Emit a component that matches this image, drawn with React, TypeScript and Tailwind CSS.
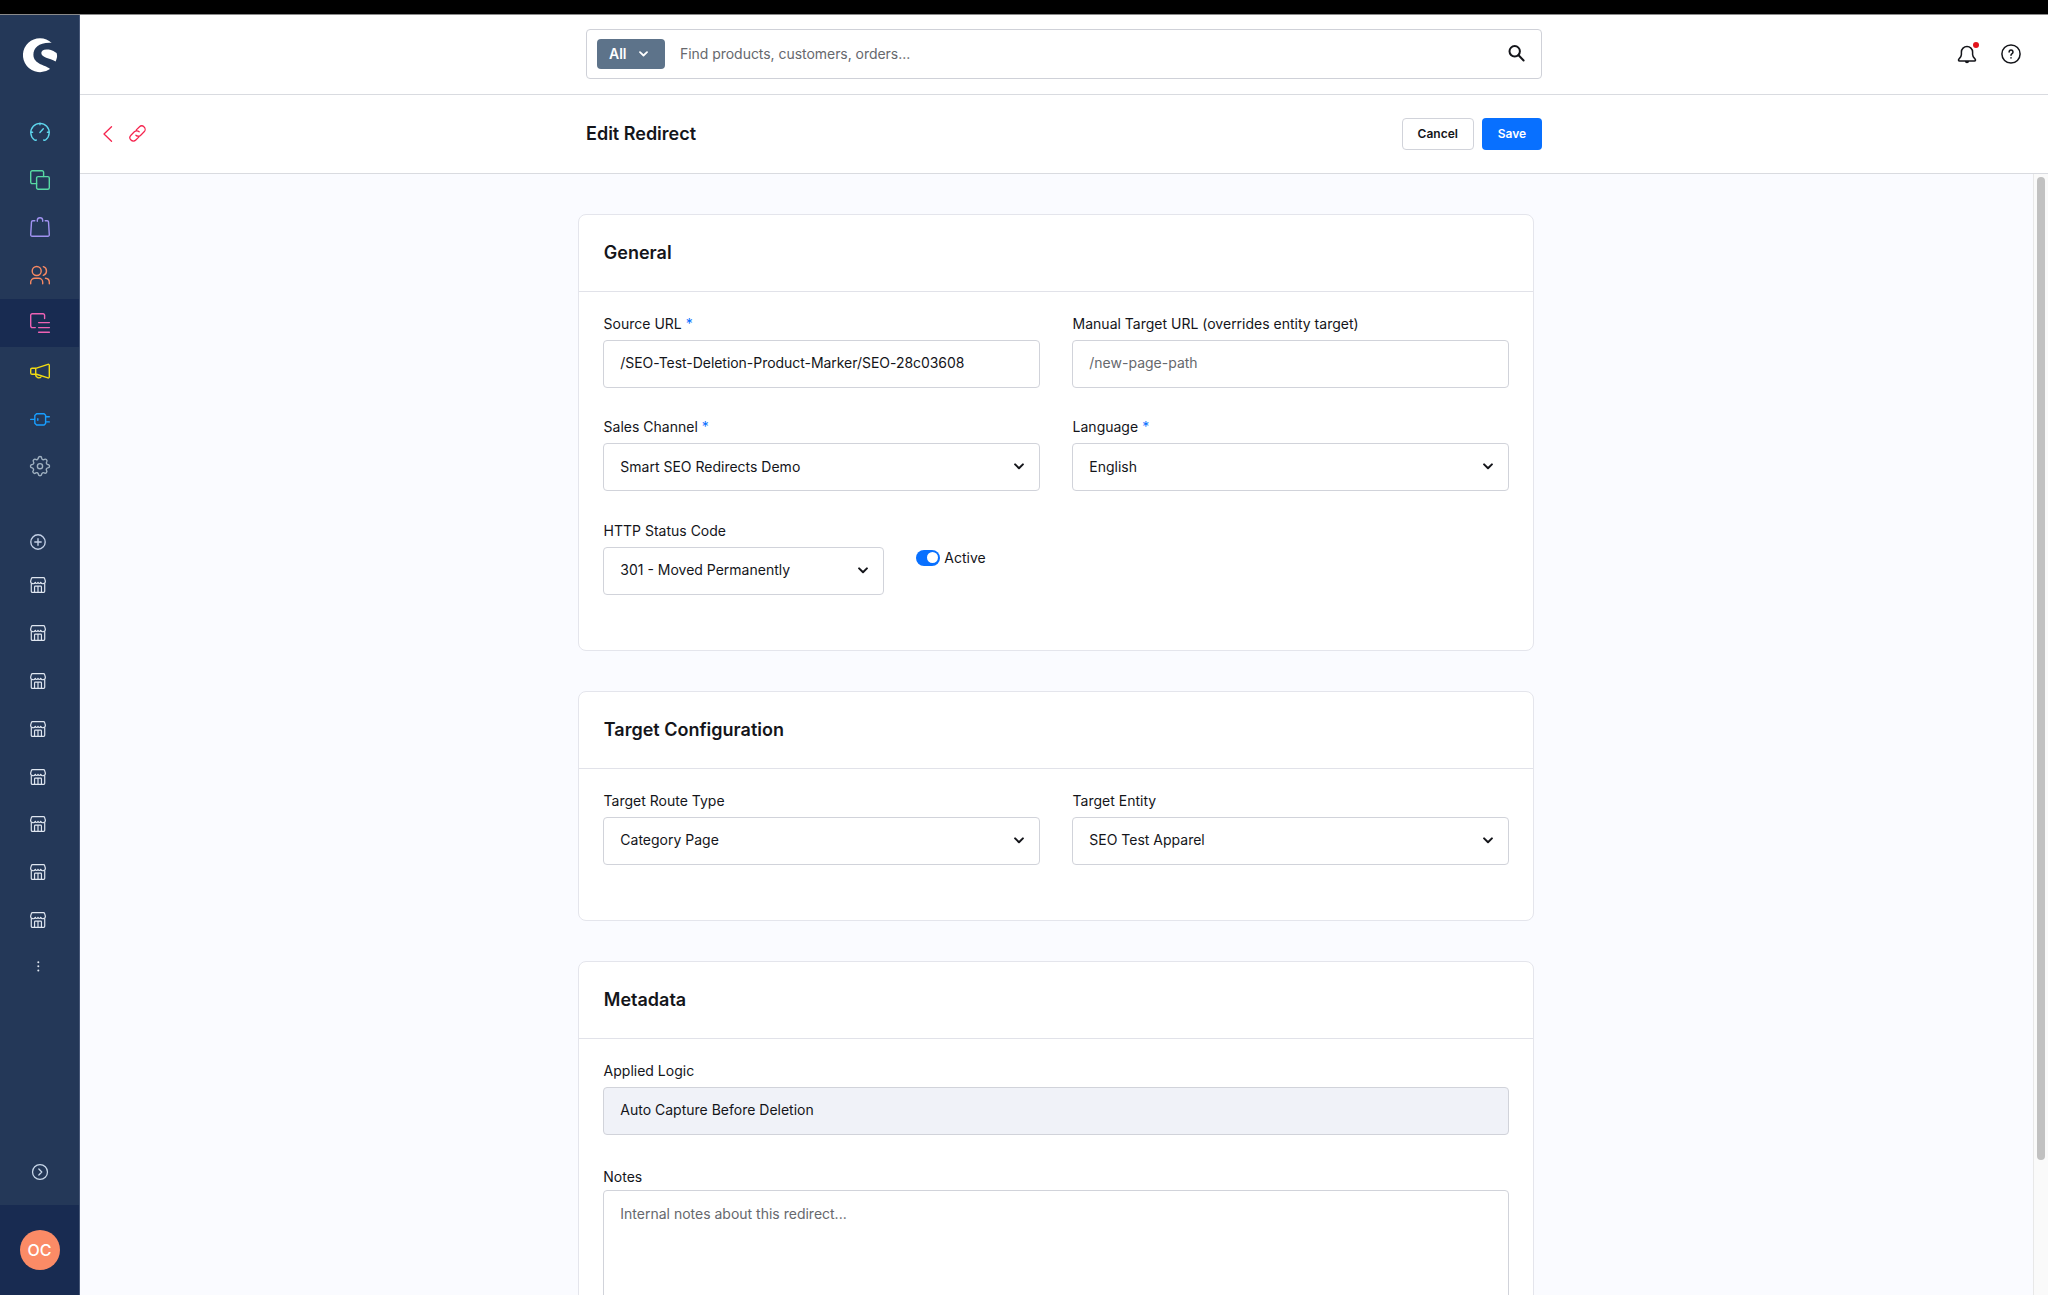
import React from "react";

type P = { children: React.ReactNode; size?: number; className?: string; w?: number };

/* Outline icon on a 20x20 grid */
function Ico({ children, size = 20, className = "", w = 1.4 }: P) {
  return (
    <svg width={size} height={size} viewBox="0 0 20 20" fill="none" stroke="currentColor" strokeWidth={w} strokeLinecap="round" strokeLinejoin="round" className={`shrink-0 overflow-visible ${className}`}>
      {children}
    </svg>
  );
}

const nav = [
  { color: "text-[#5fd7ee]", body: <><path d="M6.300 18a2 2 0 0 1-2.100-.300 9.200 9.200 0 1 1 11.600 0 2 2 0 0 1-2.100.300" /><path d="M10 1.200v1.500M1 10.200h1.600M17.400 10.200H19M9.900 10.400 13.300 6.800" /></> },
  { color: "text-[#57d9a3]", body: <><path d="M6.600 13.600H2.200A1.500 1.500 0 0 1 .7 12.100V2.200A1.500 1.500 0 0 1 2.200.700h9.900a1.500 1.500 0 0 1 1.500 1.500v4.400" /><rect x="6.600" y="6.600" width="12.700" height="12.700" rx="1.500" /></> },
  { color: "text-[#a092f0]", body: <><path d="M4.800 3.700H2.800a1.300 1.300 0 0 0-1.300 1.200L.7 17.800a1.400 1.400 0 0 0 1.400 1.500h15.800a1.400 1.400 0 0 0 1.400-1.500L18.500 4.900a1.300 1.300 0 0 0-1.300-1.200h-2" /><path d="M7.300 4.300V3.200A2.600 2.600 0 0 1 10 .8a2.600 2.600 0 0 1 2.700 2.400v1.100" /></> },
  { color: "text-[#f88962]", body: <><circle cx="6.700" cy="6" r="4.500" /><path d="M.7 18.700v-1.500a4 4 0 0 1 4-4h4a4 4 0 0 1 4 4v1.500M13.300 1.700a4.500 4.500 0 0 1 0 8.600M15.500 13.200a4 4 0 0 1 3.800 4v1.500" /></> },
  { color: "text-[#ee62b4]", active: true, body: <><path d="M5.300 14.600H2.200a1.500 1.500 0 0 1-1.500-1.500V2.300A1.500 1.500 0 0 1 2.200.8h10.900a1.500 1.500 0 0 1 1.500 1.500v3.300M8.600 9.600h10.800M8.600 14.600h10.800M8.600 19.300h10.800" /></> },
  { color: "text-[#f2dc12]", body: <><path d="M5.700 7.300 18 3.300a1 1 0 0 1 1.300 1V16a1 1 0 0 1-1.300.9L5.700 13ZM2 7.200h3.700v6H2A1.300 1.300 0 0 1 .7 12V8.500A1.300 1.300 0 0 1 2 7.200ZM5.700 13.300v.8a3 3 0 0 0 5.600 1.200" /></> },
  { color: "text-[#189eff]", body: <><path d="M.7 10.400h3.600M4.800 6.600 6.600 4.700h7.500l1.500 1.500v8.300l-1.500 1.500H6.600l-1.800-1.800ZM7.800 9.800v1.500M15.800 7.800h3.500M15.800 12.900h3.500" /></> },
  { color: "text-[#9fb0c0]", body: <><circle cx="10" cy="10.200" r="2.600" /><path d="M8.300 2.200a1.700 1.700 0 0 1 3.400 0 1.700 1.700 0 0 0 2.700 1.200 1.700 1.700 0 0 1 2.300 2.400A1.700 1.700 0 0 0 17.800 8.500a1.700 1.700 0 0 1 0 3.400 1.700 1.700 0 0 0-1.200 2.700 1.700 1.700 0 0 1-2.400 2.300A1.700 1.700 0 0 0 11.700 18a1.700 1.700 0 0 1-3.400 0 1.700 1.700 0 0 0-2.600-1.100 1.700 1.700 0 0 1-2.400-2.400A1.700 1.700 0 0 0 2.200 11.900a1.700 1.700 0 0 1 0-3.400 1.700 1.700 0 0 0 1.200-2.800 1.700 1.700 0 0 1 2.300-2.300 1.700 1.700 0 0 0 2.600-1.200Z" /></> },
];

function Shop() {
  return (
    <Ico size={16} w={1.5}>
      <path d="M1.600 8.200V17.900a1.400 1.400 0 0 0 1.400 1.400h14a1.400 1.400 0 0 0 1.400-1.400V8.200" />
      <path d="M.8 5.200 1.700 2A1.600 1.600 0 0 1 3.200.8h13.600A1.600 1.600 0 0 1 18.300 2l.9 3.200c.3 3.600-4.700 4.300-5.900 1.400-.9 2-2.400 2.100-3.300 0-.9 2.100-2.400 2-3.300 0C5.500 9.500.5 8.800.8 5.200Z" />
      <path d="M5.700 19v-6.600a1 1 0 0 1 1-1h6.600a1 1 0 0 1 1 1V19M10 11.600V19" />
    </Ico>
  );
}

function Chevron({ className = "" }: { className?: string }) {
  return (
    <svg width="10" height="7" viewBox="0 0 10 7" fill="none" stroke="currentColor" strokeWidth="2" strokeLinecap="round" strokeLinejoin="round" className={`shrink-0 ${className}`}>
      <path d="M1.100 1.400 5 5.200l3.900-3.800" />
    </svg>
  );
}

type FieldProps = { label: string; value: string; required?: boolean; select?: boolean; placeholder?: boolean; disabled?: boolean; className?: string; valueClass?: string };

function Field({ label, value, required, select, placeholder, disabled, className = "", valueClass = "" }: FieldProps) {
  return (
    <div className={className}>
      <div className="mb-1.5 flex h-5 items-center gap-1 pl-[0.300px]">
        {label}
        {required && <span className="text-[#0870ff]">*</span>}
      </div>
      <div className={`flex h-12 items-center justify-between rounded border border-[#d1d3da] pr-[15.500px] pb-px pl-4 ${disabled ? "bg-[#f0f2f8]" : "bg-white"}`}>
        <span className={`${placeholder ? "text-[#66686d]" : ""} ${valueClass}`}>{value}</span>
        {select && <Chevron />}
      </div>
    </div>
  );
}

function Card({ title, className = "", children }: { title: string; className?: string; children: React.ReactNode }) {
  return (
    <section className={`shrink-0 rounded-lg border border-[#e4e5ec] bg-white ${className}`}>
      <h2 className="flex h-[77px] items-center border-b border-[#e1e2e9] px-6 pl-[24.500px] text-lg font-semibold">{title}</h2>
      <div className="px-6 pt-[21.500px]">{children}</div>
    </section>
  );
}

export default function App() {
  return (
    <div className="flex h-[1295px] w-[2048px] flex-col overflow-hidden bg-white font-['Inter',sans-serif] text-sm text-[#14151a]">
      <div className="h-[15px] shrink-0 border-b border-[#8a8a8a] bg-black" />
      <div className="flex min-h-0 flex-1">
        <aside className="flex w-20 shrink-0 flex-col border-r border-[#475878] bg-[#243858]">
          <div className="flex h-20 items-center justify-center">
            <svg width="34" height="34" viewBox="0 0 34 34" fill="#fff" className="overflow-visible">
              <path d="M28.700 4.900A17 17 0 1 0 27 30.900c-3-3.600-16.600-4.400-16.600-14.200C10.400 9.500 16.500 4.100 28.700 4.900Z" />
              <path d="M32.600 23.400c2-4.200 1.600-6.200 1-8.400C28.900 12 26.500 11.600 23.500 11.600c-3.400 0-5.200 1.600-5.200 3.500 0 4.400 8.300 5.200 14.300 8.300Z" />
            </svg>
          </div>
          <nav className="mt-[13px] flex flex-col">
            {nav.map((n, i) => (
              <div key={i} className={`flex h-[47.800px] items-center justify-center ${n.color} ${n.active ? "bg-[#182b51]" : ""}`}>
                <Ico>{n.body}</Ico>
              </div>
            ))}
          </nav>
          <div className="mt-[42.500px] flex flex-col pl-[30px] text-[#dfe6f0]">
            <div className="flex h-[19px] items-center text-[#c3d0e6]">
              <Ico size={16} w={1.7}><circle cx="10" cy="10" r="9" /><path d="M10 6v8M6 10h8" /></Ico>
            </div>
            <div className="mt-[9.700px]">
              {Array.from({ length: 8 }, (_, i) => (
                <div key={i} className="flex h-[47.800px] items-center"><Shop /></div>
              ))}
            </div>
            <svg width="16" height="14" viewBox="0 0 16 14" fill="currentColor" className="mt-4">
              <circle cx="8.300" cy="2.300" r="1" /><circle cx="8.300" cy="6.300" r="1" /><circle cx="8.300" cy="10.500" r="1" />
            </svg>
          </div>
          <div className="mt-auto flex h-[65px] items-start justify-center text-[#c9d8ea]">
            <Ico size={18} w={1.4} className="mt-[23px]"><circle cx="10" cy="10" r="8.300" /><path d="m8.700 6.700 3.300 3.300-3.300 3.300" /></Ico>
          </div>
          <div className="flex h-[90px] items-center justify-center bg-[#182b51]">
            <div className="flex size-10 items-center justify-center rounded-full bg-[#fb8b66] text-base font-medium text-white">OC</div>
          </div>
        </aside>

        <div className="flex min-w-0 flex-1 flex-col">
          <header className="flex h-20 shrink-0 border-b border-[#d9dbe0]">
            <div className="mt-3.5 ml-[506px] flex h-[50px] w-[956px] items-center rounded border border-[#cfd1d8] px-2.5">
              <div className="flex h-[30px] w-[68px] items-center rounded bg-[#5d738a] pl-3 font-semibold text-white">
                All
                <svg width="9" height="6" viewBox="0 0 9 6" fill="none" stroke="currentColor" strokeWidth="1.800" strokeLinecap="round" strokeLinejoin="round" className="ml-3"><path d="m1 1.200 3.500 3.300L8 1.200" /></svg>
              </div>
              <span className="ml-[15px] flex-1 tracking-[-0.04px] text-[#66686d]">Find products, customers, orders...</span>
              <svg width="17" height="17" viewBox="0 0 17 17" fill="none" stroke="currentColor" strokeWidth="2" strokeLinecap="round" className="mr-1.5 mb-0.5">
                <circle cx="6.700" cy="6.300" r="5.200" /><path d="m10.600 10.300 5 5.200" />
              </svg>
            </div>
            <div className="mr-[27px] ml-auto flex h-[78px] items-center gap-6">
              <div className="relative">
                <Ico w={1.5}><path d="M10 2.500a5.600 5.600 0 0 0-5.600 5.600v2.500c0 1.900-.9 3-2.300 4.300-1 .9-.7 2 .5 2h14.800c1.200 0 1.500-1.100.5-2-1.400-1.300-2.300-2.400-2.300-4.300V8.100A5.600 5.600 0 0 0 10 2.500ZM8.400 17.300a1.700 1.700 0 0 0 3.200 0" /></Ico>
                <span className="absolute -top-[2.500px] right-[-2px] size-1.5 rounded-full bg-[#e3141c]" />
              </div>
              <Ico w={1.5}><circle cx="10" cy="10" r="9.100" /><path d="M8.100 7.900a1.950 1.950 0 1 1 3 1.700c-.8.500-1.100.8-1.100 1.600M10 13.800v.1" /></Ico>
            </div>
          </header>

          <div className="flex h-[79px] shrink-0 items-center border-b border-[#d9dbe0]">
            <div className="mb-px flex w-[506px] items-center gap-4 pl-[22px] text-[#f5244e]">
              <svg width="11" height="16" viewBox="0 0 11 16" fill="none" stroke="currentColor" strokeWidth="1.300" strokeLinecap="round" strokeLinejoin="round"><path d="M9.500.7 2 8l7.500 7.300" /></svg>
              <Ico size={17} w={1.45}><path d="m8.600 5.800 3.500-3.500a4 4 0 0 1 5.700 5.700l-4 4a4 4 0 0 1-5.700 0M11.500 14.200 8 17.700A4 4 0 0 1 2.300 12l4-4A4 4 0 0 1 12 8" /></Ico>
            </div>
            <h1 className="text-lg font-semibold">Edit Redirect</h1>
            <div className="mb-px ml-auto flex gap-2 pr-[506px] text-xs font-semibold">
              <button className="h-8 w-[72.500px] rounded border border-[#d1d3da] bg-white">Cancel</button>
              <button className="h-8 w-[60px] rounded bg-[#0870ff] text-white">Save</button>
            </div>
          </div>

          <div className="flex min-h-0 flex-1 bg-[#fafbff]">
            <main className="flex min-w-0 flex-1 flex-col gap-10 overflow-hidden pt-10">
              <Card title="General" className="ml-[498.300px] h-[437px] w-[956px]">
                <div className="grid grid-cols-2 gap-x-8 gap-y-[29.500px]">
                  <Field label="Source URL" value="/SEO-Test-Deletion-Product-Marker/SEO-28c03608" required valueClass="tracking-[-0.04px]" />
                  <Field label="Manual Target URL (overrides entity target)" value="/new-page-path" placeholder />
                  <Field label="Sales Channel" value="Smart SEO Redirects Demo" required select />
                  <Field label="Language" value="English" required select />
                </div>
                <div className="mt-[29.500px] flex gap-8">
                  <Field label="HTTP Status Code" value="301 - Moved Permanently" select className="w-[281px]" />
                  <div className="mt-[27px] flex h-5 items-center gap-1">
                    <span className="flex h-4 w-6 items-center justify-end rounded-full bg-[#0870ff] pr-0.5"><span className="size-[11px] rounded-full bg-white" /></span>
                    Active
                  </div>
                </div>
              </Card>
              <Card title="Target Configuration" className="ml-[498.300px] h-[230px] w-[956px]">
                <div className="grid grid-cols-2 gap-x-8">
                  <Field label="Target Route Type" value="Category Page" select />
                  <Field label="Target Entity" value="SEO Test Apparel" select />
                </div>
              </Card>
              <Card title="Metadata" className="ml-[498.300px] h-[500px] w-[956px]">
                <Field label="Applied Logic" value="Auto Capture Before Deletion" disabled />
                <div className="mt-8 flex h-5 items-center">Notes</div>
                <div className="mt-[3px] h-[150px] rounded border border-[#d1d3da] px-4 pt-[13px] text-[#66686d]">Internal notes about this redirect...</div>
              </Card>
            </main>
            <div className="w-[15px] shrink-0 border-l border-[#e8e8e8] bg-[#fafafa] pt-[3px] pl-[3px]">
              <div className="h-[983px] w-2 rounded-full bg-[#c1c1c1]" />
            </div>
          </div>
        </div>
      </div>
    </div>
  );
}
